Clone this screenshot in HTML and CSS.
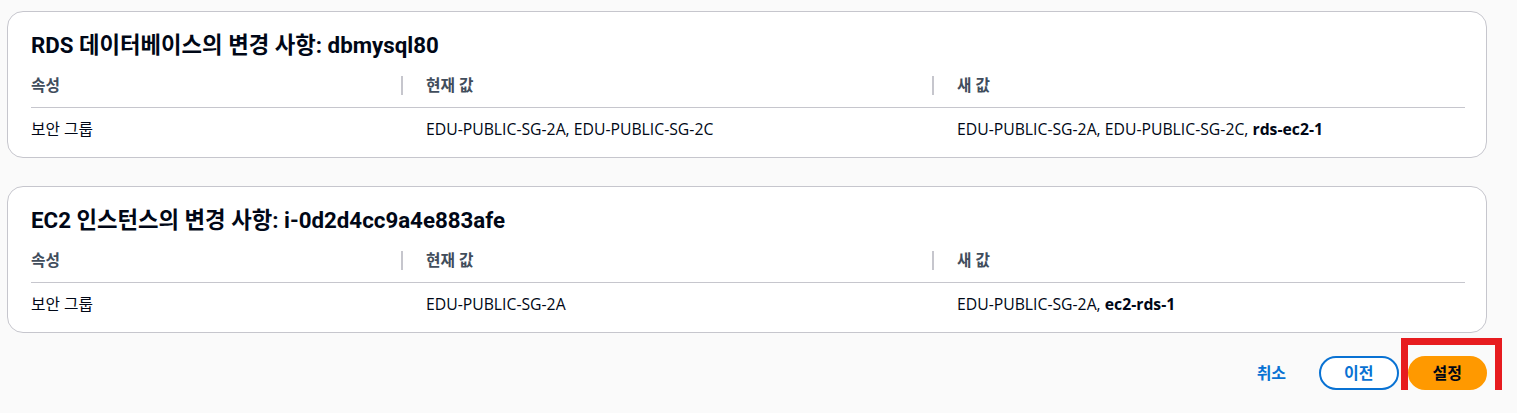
FILE: index.html
```html
<!DOCTYPE html>
<html lang="ko">
<head>
<meta charset="utf-8">
<title>변경 사항</title>
<link rel="stylesheet" href="styles.css">
</head>
<body>
<main class="page">
  <section class="card">
    <h2 class="card-title">RDS 데이터베이스의 변경 사항: dbmysql80</h2>
    <div class="table">
      <div class="th">속성</div>
      <div class="th div">현재 값</div>
      <div class="th div">새 값</div>
      <div class="td">보안 그룹</div>
      <div class="td col">EDU-PUBLIC-SG-2A, EDU-PUBLIC-SG-2C</div>
      <div class="td col">EDU-PUBLIC-SG-2A, EDU-PUBLIC-SG-2C, <b>rds-ec2-1</b></div>
    </div>
  </section>
  <section class="card">
    <h2 class="card-title">EC2 인스턴스의 변경 사항: i-0d2d4cc9a4e883afe</h2>
    <div class="table">
      <div class="th">속성</div>
      <div class="th div">현재 값</div>
      <div class="th div">새 값</div>
      <div class="td">보안 그룹</div>
      <div class="td col">EDU-PUBLIC-SG-2A</div>
      <div class="td col">EDU-PUBLIC-SG-2A, <b>ec2-rds-1</b></div>
    </div>
  </section>
  <div class="actions">
    <button class="btn link">취소</button>
    <button class="btn normal">이전</button>
    <div class="highlight-box">
      <button class="btn primary">설정</button>
    </div>
  </div>
</main>
</body>
</html>
```
FILE: styles.css
```css
* { box-sizing: border-box; }
html, body { margin: 0; padding: 0; }
body {
  background: #fafafa;
  font-family: "Open Sans", "Noto Sans CJK KR", sans-serif;
  color: #000716;
  font-size: 15.75px;
  line-height: 20px;
}
.page {
  width: 1480px;
  margin-left: 7px;
  padding-top: 11px;
  display: flex;
  flex-direction: column;
  gap: 28px;
}
.card {
  background: #ffffff;
  border: 1px solid #c6c6cd;
  border-radius: 16px;
  height: 147px;
  padding: 19px 21px 0 23px;
}
.card-title {
  margin: 0;
  font-family: "Roboto", "Noto Sans CJK KR", sans-serif;
  font-size: 22.3px;
  line-height: 28px;
  font-weight: 700;
  color: #000716;
}
.table {
  margin-top: 4px;
  display: grid;
  grid-template-columns: 370px 531px 1fr;
}
.th {
  position: relative;
  padding: 12px 0;
  font-weight: 700;
  color: #414d5c;
  border-bottom: 1px solid #c6c6cd;
}
.th.div, .td.col { padding-left: 25px; }
.th.div::before {
  content: "";
  position: absolute;
  left: 0;
  top: 13px;
  width: 2px;
  height: 19px;
  background: #c6c6cd;
}
.td {
  padding: 11px 0;
}
.td b { font-weight: 700; }
.actions {
  margin-top: -5px;
  height: 34px;
  display: flex;
  justify-content: flex-end;
  align-items: center;
  gap: 8px;
}
.btn {
  display: block;
  margin: 0;
  font-family: "Open Sans", "Noto Sans CJK KR", sans-serif;
  font-size: 16px;
  font-weight: 700;
  height: 34px;
  line-height: 20px;
  padding: 0 23px;
  border-radius: 20px;
  border: 2px solid transparent;
  background: transparent;
  cursor: pointer;
}
.btn.link { color: #0972d3; }
.btn.normal { color: #0972d3; border-color: #0972d3; background: #ffffff; }
.btn.primary { color: #000716; background: #ff9900; border-color: #ff9900; }
.highlight-box {
  display: flex;
  border: 7px solid #e71c1f;
  padding: 11px 8px 13px 0;
  margin: -18px -15px -20px -6px;
}
```
